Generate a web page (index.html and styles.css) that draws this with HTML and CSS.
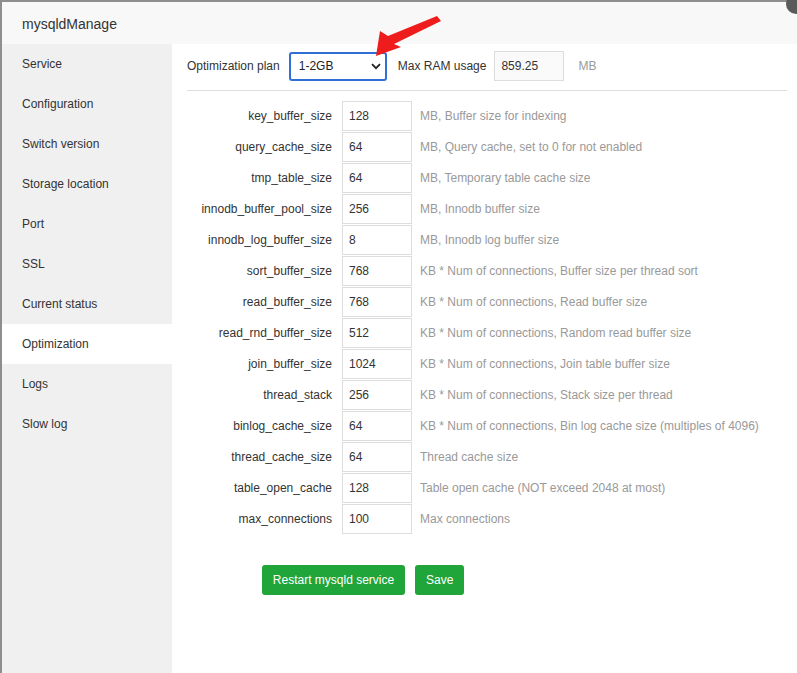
FILE: index.html
```html
<!DOCTYPE html>
<html>
<head>
<meta charset="utf-8">
<link rel="stylesheet" href="styles.css">
</head>
<body>
<div class="modal">
  <div class="title">mysqldManage</div>
  <div class="main">
    <ul class="side">
      <li>Service</li>
      <li>Configuration</li>
      <li>Switch version</li>
      <li>Storage location</li>
      <li>Port</li>
      <li>SSL</li>
      <li>Current status</li>
      <li class="active">Optimization</li>
      <li>Logs</li>
      <li>Slow log</li>
    </ul>
    <div class="content">
      <div class="plan">
        <span class="plan-label">Optimization plan</span>
        <div class="select"><span>1-2GB</span>
          <svg class="chev" width="10" height="7" viewBox="0 0 10 7"><path d="M1 1.2 L5 5.2 L9 1.2" fill="none" stroke="#222" stroke-width="1.8"/></svg>
        </div>
        <span class="ram-label">Max RAM usage</span>
        <div class="ram">859.25</div>
        <span class="unit">MB</span>
      </div>
      <div class="rule"></div>
      <div class="rows">
        <div class="row"><span class="lbl">key_buffer_size</span><div class="val">128</div><span class="desc">MB, Buffer size for indexing</span></div>
        <div class="row"><span class="lbl">query_cache_size</span><div class="val">64</div><span class="desc">MB, Query cache, set to 0 for not enabled</span></div>
        <div class="row"><span class="lbl">tmp_table_size</span><div class="val">64</div><span class="desc">MB, Temporary table cache size</span></div>
        <div class="row"><span class="lbl">innodb_buffer_pool_size</span><div class="val">256</div><span class="desc">MB, Innodb buffer size</span></div>
        <div class="row"><span class="lbl">innodb_log_buffer_size</span><div class="val">8</div><span class="desc">MB, Innodb log buffer size</span></div>
        <div class="row"><span class="lbl">sort_buffer_size</span><div class="val">768</div><span class="desc">KB * Num of connections, Buffer size per thread sort</span></div>
        <div class="row"><span class="lbl">read_buffer_size</span><div class="val">768</div><span class="desc">KB * Num of connections, Read buffer size</span></div>
        <div class="row"><span class="lbl">read_rnd_buffer_size</span><div class="val">512</div><span class="desc">KB * Num of connections, Random read buffer size</span></div>
        <div class="row"><span class="lbl">join_buffer_size</span><div class="val">1024</div><span class="desc">KB * Num of connections, Join table buffer size</span></div>
        <div class="row"><span class="lbl">thread_stack</span><div class="val">256</div><span class="desc">KB * Num of connections, Stack size per thread</span></div>
        <div class="row"><span class="lbl">binlog_cache_size</span><div class="val">64</div><span class="desc">KB * Num of connections, Bin log cache size (multiples of 4096)</span></div>
        <div class="row"><span class="lbl">thread_cache_size</span><div class="val">64</div><span class="desc">Thread cache size</span></div>
        <div class="row"><span class="lbl">table_open_cache</span><div class="val">128</div><span class="desc">Table open cache (NOT exceed 2048 at most)</span></div>
        <div class="row"><span class="lbl">max_connections</span><div class="val">100</div><span class="desc">Max connections</span></div>
      </div>
      <div class="actions">
        <button class="btn restart">Restart mysqld service</button>
        <button class="btn">Save</button>
      </div>
    </div>
  </div>
</div>
<div class="close"></div>
<svg class="arrow" width="797" height="673" viewBox="0 0 797 673">
  <polygon points="376,56 380,31 388,36 437,16 441,21 394,44 401,47" fill="#ee1c1c"/>
</svg>
</body>
</html>
```
FILE: styles.css
```css
* { box-sizing: border-box; }
html, body { margin: 0; padding: 0; }
body {
  background: #8e8e8e;
  font-family: "Liberation Sans", Arial, sans-serif;
  font-size: 12px;
  color: #333;
  width: 797px;
  height: 673px;
  overflow: hidden;
  position: relative;
}
.modal {
  margin: 2px 0 0 2px;
  width: 795px;
  height: 671px;
  background: #fff;
  display: flex;
  flex-direction: column;
}
.title {
  height: 42px;
  line-height: 44px;
  background: #f8f8f8;
  padding-left: 20px;
  font-size: 14px;
  color: #333;
}
.main {
  flex: 1;
  display: flex;
}
.side {
  list-style: none;
  margin: 0;
  padding: 0;
  width: 170px;
  background: #f0f0f0;
}
.side li {
  height: 40px;
  line-height: 40px;
  padding-left: 20px;
  color: #333;
}
.side li.active { background: #fff; }
.content {
  flex: 1;
  padding: 7px 0 0 15px;
}
.plan {
  display: flex;
  align-items: center;
  height: 30px;
}
.plan-label { margin-right: 9px; }
.select {
  width: 98px;
  height: 29px;
  border: 2px solid #2f6fd6;
  border-radius: 3px;
  display: flex;
  align-items: center;
  justify-content: space-between;
  padding: 0 4px 0 8px;
  color: #222;
}
.chev { margin-top: 1px; }
.ram-label { margin-left: 11px; margin-right: 8px; }
.ram {
  width: 70px;
  height: 30px;
  border: 1px solid #ddd;
  background: #fafafa;
  line-height: 28px;
  padding-left: 6px;
  color: #333;
}
.unit { margin-left: 14px; color: #999; }
.rule {
  width: 600px;
  height: 1px;
  background: #ddd;
  margin-top: 9px;
}
.rows {
  margin-top: 10px;
  display: flex;
  flex-direction: column;
  gap: 1px;
}
.row {
  display: flex;
  align-items: center;
  height: 30px;
}
.lbl {
  width: 145px;
  text-align: right;
  margin-right: 10px;
  color: #333;
}
.val {
  width: 70px;
  height: 30px;
  border: 1px solid #ddd;
  line-height: 28px;
  padding-left: 6px;
  color: #333;
  background: #fff;
}
.desc { margin-left: 8px; color: #999; }
.actions {
  margin-top: 31px;
  padding-left: 75px;
  display: flex;
  gap: 10px;
}
.btn {
  height: 30px;
  border: none;
  border-radius: 3px;
  background: #20a53a;
  color: #fff;
  font-family: "Liberation Sans", Arial, sans-serif;
  font-size: 12px;
  padding: 0 11px;
}
.btn.restart { width: 143px; padding: 0; }
.close {
  position: absolute;
  left: 786px;
  top: -6px;
  width: 20px;
  height: 20px;
  border-radius: 50%;
  background: #5a5a5a;
}
.arrow {
  position: absolute;
  left: 0;
  top: 0;
  pointer-events: none;
}
```
